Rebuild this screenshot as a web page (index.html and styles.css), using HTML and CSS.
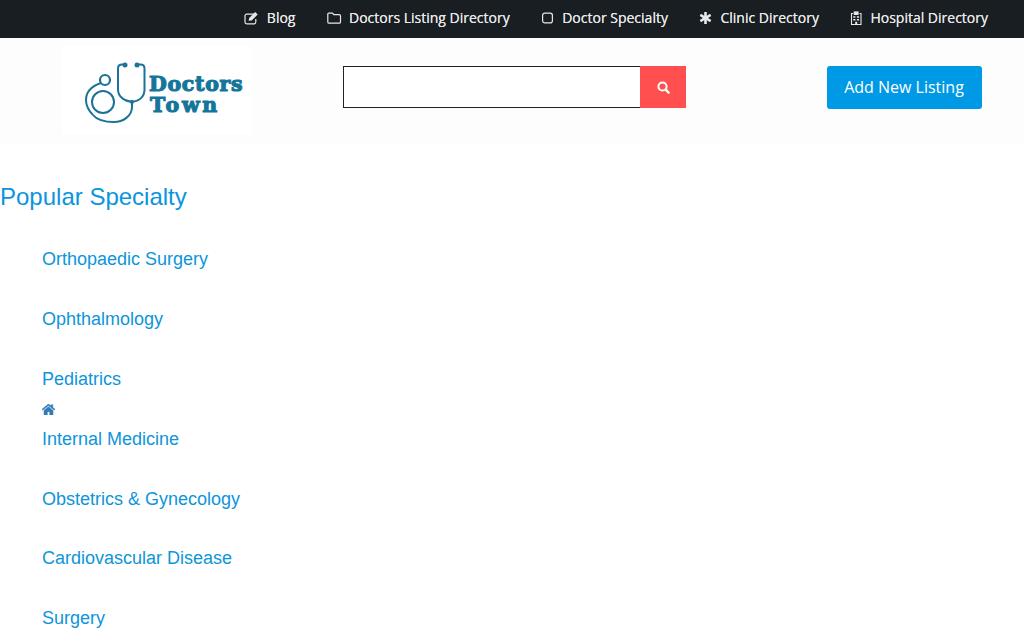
FILE: index.html
```html
<!DOCTYPE html>
<html lang="en">
<head>
<meta charset="utf-8">
<title>Doctors Town</title>
<link rel="stylesheet" href="styles.css">
</head>
<body>
<nav class="topbar">
  <a class="toplink" href="#"><span class="tbox w23"><svg class="ti" viewBox="0 0 15 13"><path d="M11 2.600H2.800A1.800 1.800 0 0 0 1 4.400v6.200a1.800 1.800 0 0 0 1.800 1.800h7.200a1.800 1.800 0 0 0 1.800-1.800V7.500" fill="none" stroke="currentColor" stroke-width="1.200"/><path d="M4.600 9.300l.6-2.800L11.200.6l2.500 2.400-6 6z" fill="currentColor"/></svg></span>Blog</a>
  <a class="toplink" href="#"><span class="tbox w22"><svg class="ti" viewBox="0 0 15 13"><path d="M1.800 1.600h3.700l1.300 1.600h5.400a1.300 1.300 0 0 1 1.300 1.300v5.900a1.300 1.300 0 0 1-1.300 1.300H2.100a1.300 1.300 0 0 1-1.300-1.300V2.500a.9.9 0 0 1 1-.9z" fill="none" stroke="currentColor" stroke-width="1.200"/></svg></span>Doctors Listing Directory</a>
  <a class="toplink" href="#"><span class="tbox w21"><svg class="ti" viewBox="0 0 15 13"><rect x="1.600" y="1.600" width="9.800" height="9.800" rx="2.200" fill="none" stroke="currentColor" stroke-width="1.200"/></svg></span>Doctor Specialty</a>
  <a class="toplink" href="#"><span class="tbox w21"><svg class="ti" viewBox="0 0 15 13"><path d="M5.200.4h2.600v3.800l3.200-1.900 1.300 2.300-3.200 1.900 3.200 1.900-1.300 2.300-3.200-1.900v3.800H5.200V8.800L2 10.700.7 8.400l3.200-1.900L.7 4.600 2 2.300l3.200 1.900z" fill="currentColor"/></svg></span>Clinic Directory</a>
  <a class="toplink" href="#"><span class="tbox w20"><svg class="ti" viewBox="0 0 15 14"><path d="M3 2.500H1.500v11h9.500v-11H9.500" fill="none" stroke="currentColor" stroke-width="1.100"/><path d="M3.700.4h4.900v3.600H3.700z" fill="currentColor"/><path d="M3.200 5.200h2.200v1.500H3.200zm3.700 0h2.200v1.500H6.900zM3.200 8h2.200v1.500H3.200zm3.700 0h2.200v1.500H6.900zM5.200 10.700h2v2.600h-2z" fill="currentColor"/></svg></span>Hospital Directory</a>
</nav>

<header class="header">
  <div class="logo">
    <svg class="scope" viewBox="0 0 64 66">
      <g fill="none" stroke="#1b7397" stroke-width="2">
        <path d="M41 4.500h-3c-2.500 0-4 1.500-4 4v21c0 7 6.500 12 14 12s12.500-5 12.500-12v-21c0-2.500-1.500-4-4-4h-3"/>
        <path d="M48 42v5c0 9-9 15-18 15-9 0-17-2-21-7"/>
        <path d="M17 23C8 26 2 32 2 40c0 6 3 11 7 15"/>
        <circle cx="21" cy="20" r="5" stroke-width="2.200"/>
        <circle cx="19" cy="42" r="11"/>
      </g>
      <circle cx="41" cy="5" r="2.500" fill="#1b7397"/>
      <circle cx="53" cy="5" r="2.500" fill="#1b7397"/>
      <circle cx="48" cy="42" r="2" fill="#1b7397"/>
    </svg>
    <div class="brand"><span class="brand-top">Doctors</span><span class="brand-bottom">Town</span></div>
  </div>
  <form class="search">
    <input class="search-input" type="text" aria-label="Search">
    <button class="search-btn" type="button" aria-label="Search"><svg class="si" viewBox="0 0 13 13"><circle cx="5.500" cy="5.500" r="4.100" fill="none" stroke="#fff" stroke-width="2"/><path d="M8.700 8.700l2.900 2.900" stroke="#fff" stroke-width="2.400" stroke-linecap="round"/></svg></button>
  </form>
  <a class="add-btn" href="#">Add New Listing</a>
</header>

<main class="content">
  <h2 class="title">Popular Specialty</h2>
  <ul class="list">
    <li><a href="#">Orthopaedic Surgery</a></li>
    <li><a href="#">Ophthalmology</a></li>
    <li><a href="#">Pediatrics</a></li>
    <li class="with-home"><svg class="home" viewBox="0 0 13 11"><path d="M6.500 0L0 5.300l.7.9L6.500 1.600l5.800 4.600.7-.9-2.200-1.800V.7H9.200v1.300zM2 6.400V11h3.300V7.700h2.400V11H11V6.400L6.500 2.800z" fill="#337ab7" stroke="#337ab7" stroke-width=".5"/></svg><a href="#">Internal Medicine</a></li>
    <li><a href="#">Obstetrics &amp; Gynecology</a></li>
    <li><a href="#">Cardiovascular Disease</a></li>
    <li class="last"><a href="#">Surgery</a></li>
  </ul>
</main>
</body>
</html>
```
FILE: styles.css
```css
html, body { margin: 0; padding: 0; overflow: hidden; height: 629px; background: #fff; }
body { font-family: "Liberation Sans", Arial, sans-serif; }

.topbar { height: 38px; background: #191e22; display: flex; justify-content: flex-end; align-items: center; gap: 31.500px; padding: 0 36px 3px 0; box-sizing: border-box; }
.toplink { display: flex; align-items: center; color: #e8e8e8; text-decoration: none; font: 14px "Open Sans", sans-serif; text-shadow: 0 0 .3px #e8e8e8; }
.tbox { display: block; flex: none; height: 13px; }
.w23 { width: 23px; }
.w22 { width: 22px; }
.w21 { width: 21px; }
.w20 { width: 20px; }
.ti { display: block; width: 15px; height: 14px; color: #e8e8e8; }

.header { height: 106px; background: #fdfdfd; position: relative; display: flex; align-items: flex-start; }
.logo { width: 190px; height: 88px; margin: 8px 0 0 62px; background: #fff; display: flex; align-items: flex-start; flex: none; }
.scope { width: 64px; height: 66px; margin: 14px 0 0 22px; flex: none; }
.brand { font: 900 20.500px/20px "DejaVu Serif", serif; -webkit-text-stroke: 1.100px #14759b; color: #14759b; margin: 28px 0 0 1px; white-space: nowrap; }
.brand-top { display: block; letter-spacing: .7px; height: 21px; }
.brand-bottom { display: block; letter-spacing: 2.700px; margin-left: 1px; }

.search { display: flex; margin: 28px 0 0 91px; }
.search-input { width: 297px; height: 42px; box-sizing: border-box; border: 1px solid #222; border-right: 0; background: #fff; padding: 0; margin: 0; }
.search-btn { width: 46px; height: 42px; background: #ff4f4f; border: 0; padding: 0; display: flex; align-items: center; justify-content: center; }
.si { width: 13px; height: 13px; }
.add-btn { margin: 28px 0 0 141px; width: 154px; padding-right: 1px; height: 43px; text-align: center; background: #0099e5; color: #fff; border-radius: 3px; text-decoration: none; font: 16px/43px "Open Sans", sans-serif; }

.content { padding-top: 38px; }
.title { margin: 0; font-size: 24px; line-height: 30px; font-weight: 400; color: #0a95dc; }
.list { list-style: none; margin: 37.250px 0 0; padding: 0 0 0 42px; }
.list li { height: 59.830px; line-height: 21px; font-size: 18px; position: relative; }
.list li.last { height: 21px; }
.list a { color: #0d95da; text-decoration: none; }
.home { position: absolute; left: 0; top: -25px; width: 13px; height: 11px; }
```
